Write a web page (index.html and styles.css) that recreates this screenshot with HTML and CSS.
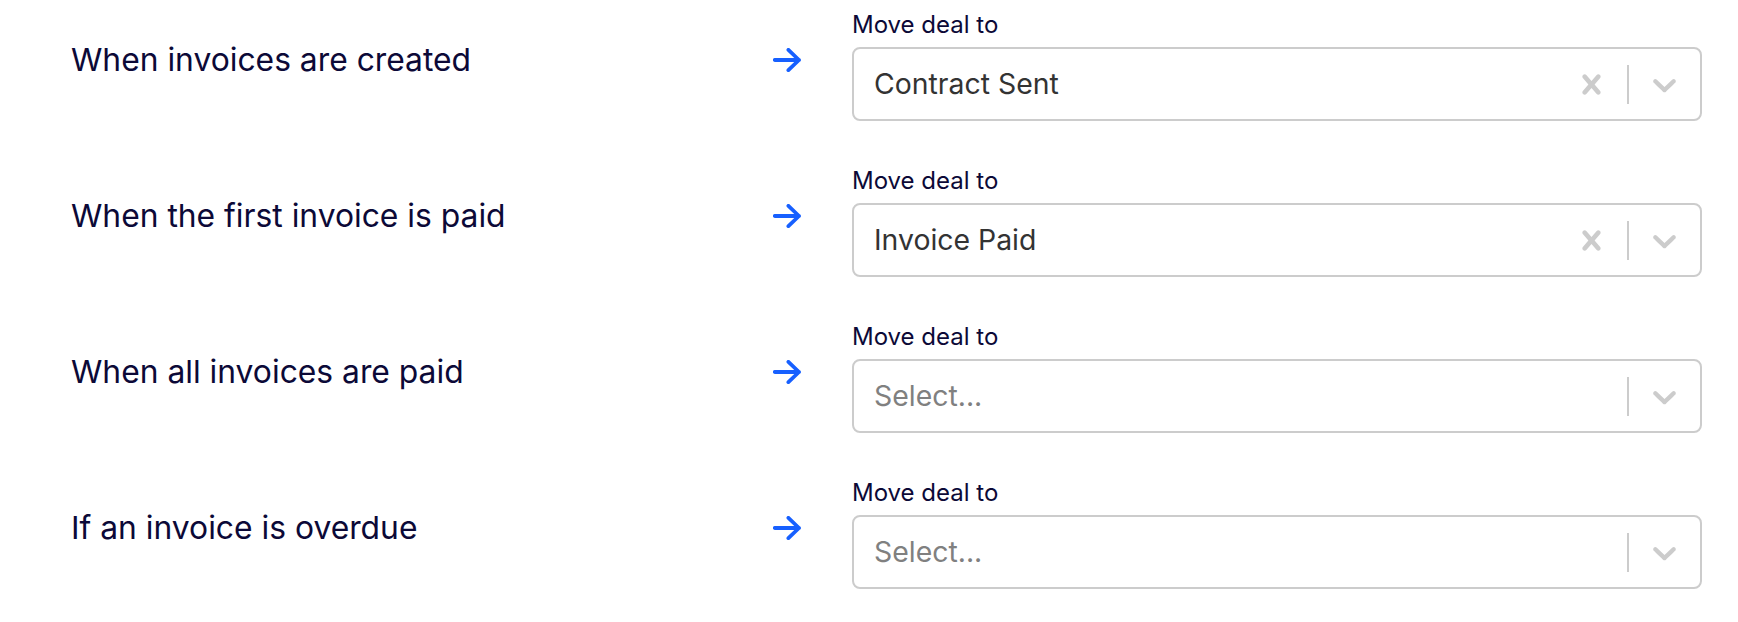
FILE: index.html
```html
<!DOCTYPE html>
<html lang="en">
<head>
<meta charset="utf-8">
<title>Deal stage automation</title>
<link rel="stylesheet" href="styles.css">
</head>
<body>
<div class="rules">
  <div class="rule">
    <div class="trigger">When invoices are created</div>
    <svg class="arrow" viewBox="0 0 28 24" width="28" height="24"><path d="M1.8 12H26M15.4 1.8L26 12L15.4 22.2"/></svg>
    <div class="field">
      <div class="field-label">Move deal to</div>
      <div class="select">
        <div class="value">Contract Sent</div>
        <div class="indicators">
          <span class="ind"><svg viewBox="0 0 20 20"><path d="M14.348 14.849c-0.469 0.469-1.229 0.469-1.697 0l-2.651-3.030-2.651 3.029c-0.469 0.469-1.229 0.469-1.697 0-0.469-0.469-0.469-1.229 0-1.697l2.758-3.150-2.759-3.152c-0.469-0.469-0.469-1.228 0-1.697s1.228-0.469 1.697 0l2.652 3.031 2.651-3.031c0.469-0.469 1.228-0.469 1.697 0s0.469 1.229 0 1.697l-2.758 3.152 2.758 3.150c0.469 0.469 0.469 1.229 0 1.698z"/></svg></span>
          <span class="sep"></span>
          <span class="ind"><svg viewBox="0 0 20 20"><path d="M4.516 7.548c0.436-0.446 1.043-0.481 1.576 0l3.908 3.747 3.908-3.747c0.533-0.481 1.141-0.446 1.574 0 0.436 0.445 0.408 1.197 0 1.615-0.406 0.418-4.695 4.502-4.695 4.502-0.217 0.223-0.502 0.335-0.787 0.335s-0.570-0.112-0.789-0.335c0 0-4.287-4.084-4.695-4.502s-0.436-1.170 0-1.615z"/></svg></span>
        </div>
      </div>
    </div>
  </div>

  <div class="rule">
    <div class="trigger">When the first invoice is paid</div>
    <svg class="arrow" viewBox="0 0 28 24" width="28" height="24"><path d="M1.8 12H26M15.4 1.8L26 12L15.4 22.2"/></svg>
    <div class="field">
      <div class="field-label">Move deal to</div>
      <div class="select">
        <div class="value">Invoice Paid</div>
        <div class="indicators">
          <span class="ind"><svg viewBox="0 0 20 20"><path d="M14.348 14.849c-0.469 0.469-1.229 0.469-1.697 0l-2.651-3.030-2.651 3.029c-0.469 0.469-1.229 0.469-1.697 0-0.469-0.469-0.469-1.229 0-1.697l2.758-3.150-2.759-3.152c-0.469-0.469-0.469-1.228 0-1.697s1.228-0.469 1.697 0l2.652 3.031 2.651-3.031c0.469-0.469 1.228-0.469 1.697 0s0.469 1.229 0 1.697l-2.758 3.152 2.758 3.150c0.469 0.469 0.469 1.229 0 1.698z"/></svg></span>
          <span class="sep"></span>
          <span class="ind"><svg viewBox="0 0 20 20"><path d="M4.516 7.548c0.436-0.446 1.043-0.481 1.576 0l3.908 3.747 3.908-3.747c0.533-0.481 1.141-0.446 1.574 0 0.436 0.445 0.408 1.197 0 1.615-0.406 0.418-4.695 4.502-4.695 4.502-0.217 0.223-0.502 0.335-0.787 0.335s-0.570-0.112-0.789-0.335c0 0-4.287-4.084-4.695-4.502s-0.436-1.170 0-1.615z"/></svg></span>
        </div>
      </div>
    </div>
  </div>

  <div class="rule">
    <div class="trigger">When all invoices are paid</div>
    <svg class="arrow" viewBox="0 0 28 24" width="28" height="24"><path d="M1.8 12H26M15.4 1.8L26 12L15.4 22.2"/></svg>
    <div class="field">
      <div class="field-label">Move deal to</div>
      <div class="select">
        <div class="value placeholder">Select...</div>
        <div class="indicators">
          <span class="sep"></span>
          <span class="ind"><svg viewBox="0 0 20 20"><path d="M4.516 7.548c0.436-0.446 1.043-0.481 1.576 0l3.908 3.747 3.908-3.747c0.533-0.481 1.141-0.446 1.574 0 0.436 0.445 0.408 1.197 0 1.615-0.406 0.418-4.695 4.502-4.695 4.502-0.217 0.223-0.502 0.335-0.787 0.335s-0.570-0.112-0.789-0.335c0 0-4.287-4.084-4.695-4.502s-0.436-1.170 0-1.615z"/></svg></span>
        </div>
      </div>
    </div>
  </div>

  <div class="rule">
    <div class="trigger">If an invoice is overdue</div>
    <svg class="arrow" viewBox="0 0 28 24" width="28" height="24"><path d="M1.8 12H26M15.4 1.8L26 12L15.4 22.2"/></svg>
    <div class="field">
      <div class="field-label">Move deal to</div>
      <div class="select">
        <div class="value placeholder">Select...</div>
        <div class="indicators">
          <span class="sep"></span>
          <span class="ind"><svg viewBox="0 0 20 20"><path d="M4.516 7.548c0.436-0.446 1.043-0.481 1.576 0l3.908 3.747 3.908-3.747c0.533-0.481 1.141-0.446 1.574 0 0.436 0.445 0.408 1.197 0 1.615-0.406 0.418-4.695 4.502-4.695 4.502-0.217 0.223-0.502 0.335-0.787 0.335s-0.570-0.112-0.789-0.335c0 0-4.287-4.084-4.695-4.502s-0.436-1.170 0-1.615z"/></svg></span>
        </div>
      </div>
    </div>
  </div>
</div>
</body>
</html>
```

FILE: styles.css
```css
* { box-sizing: border-box; }

html, body {
  margin: 0;
  background: #ffffff;
}

body {
  font-family: Inter, "Noto Sans", "Liberation Sans", sans-serif;
  color: #0c0937;
}

.rules {
  display: flex;
  flex-direction: column;
  gap: 46px;
  padding: 11px 36px 0 71px;
}

.rule {
  display: flex;
  align-items: flex-start;
  height: 110px;
}

.trigger {
  flex: 1;
  margin-top: 29px;
  font-size: 31.8px;
  line-height: 40px;
  color: #0c0937;
}

.arrow {
  flex: none;
  margin-top: 37px;
  margin-left: 1px;
  margin-right: 51px;
  fill: none;
  stroke: #1760ff;
  stroke-width: 3.8;
  stroke-linecap: round;
  stroke-linejoin: round;
}

.field {
  flex: none;
  width: 850px;
  display: flex;
  flex-direction: column;
  gap: 9px;
}

.field-label {
  font-size: 24px;
  line-height: 27px;
  color: #0c0937;
}

.select {
  height: 74px;
  border: 2px solid #cccccc;
  border-radius: 8px;
  display: flex;
  align-items: center;
  padding-left: 20px;
}

.value {
  flex: 1;
  font-size: 28.4px;
  line-height: 36px;
  color: #333333;
}

.value.placeholder {
  color: #808080;
}

.indicators {
  display: flex;
  align-items: center;
  align-self: stretch;
}

.ind {
  display: flex;
  padding: 15.5px 16px;
}

.ind svg {
  width: 39px;
  height: 39px;
  fill: #cccccc;
}

.sep {
  width: 2px;
  height: 39px;
  background: #cccccc;
}
```
